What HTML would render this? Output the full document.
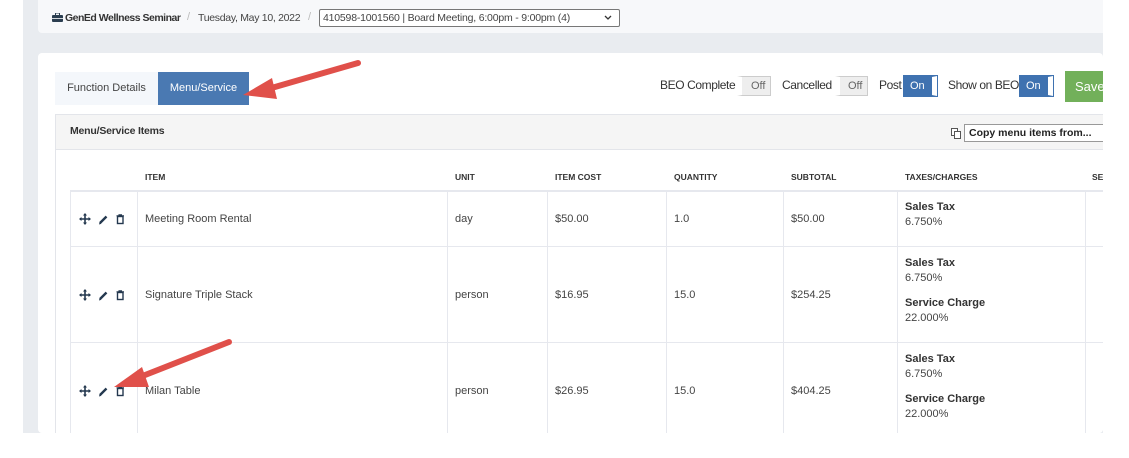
<!DOCTYPE html>
<html><head><meta charset="utf-8"><style>
*{box-sizing:border-box;margin:0;padding:0}
html,body{width:1129px;height:458px;overflow:hidden}
body{background:#fff;font-family:"Liberation Sans",sans-serif;color:#333;position:relative}
.a{position:absolute;white-space:nowrap}
#bg{left:23px;top:0;width:1080px;height:433px;background:#e9ecf0;overflow:hidden}
.crumb{left:15px;top:0;width:1070px;height:33px;background:#f7f8fa;border-radius:0 0 4px 4px;font-size:11px;color:#444}
#card{left:15px;top:53px;width:1065px;height:380px;background:#fff;border-radius:4px;overflow:hidden}
.tab{font-size:11px;height:33px;line-height:33px;text-align:center}
.tog{height:20px;border:1px solid #ccc;font-size:11px;line-height:18px}
.th{font-size:8.5px;font-weight:bold;color:#333;top:172px}
.vl{width:1px;background:#e6e8ee}
.hl{height:1px;background:#e6e8ee}
.c{font-size:11px;color:#444}
.b{font-size:11px;font-weight:bold;color:#333}
.lb{font-size:12px;color:#333;top:25px;letter-spacing:-0.4px}
</style></head><body>
<div id="bg" class="a">
 <div class="a crumb">
  <svg class="a" style="left:14px;top:13px" width="11" height="9" viewBox="0 0 11 9"><rect x="0" y="2" width="11" height="7" rx="1" fill="#2b3e50"/><rect x="3.5" y="0" width="4" height="3" fill="none" stroke="#2b3e50" stroke-width="1"/><rect x="0" y="5" width="11" height="0.8" fill="#fff"/></svg>
  <span class="a" style="left:27px;top:12px;font-weight:bold;font-size:10.5px;letter-spacing:-0.5px;color:#333">GenEd Wellness Seminar</span>
  <span class="a" style="left:149px;top:11px;color:#bbb">/</span>
  <span class="a" style="left:160px;top:12px;font-size:10.5px;letter-spacing:-0.3px">Tuesday, May 10, 2022</span>
  <span class="a" style="left:270px;top:11px;color:#bbb">/</span>
  <div class="a" style="left:281px;top:9px;width:301px;height:18px;border:1px solid #777;background:#fff;font-size:10.5px;line-height:16px;padding-left:3px;border-radius:2px;letter-spacing:-0.2px">410598-1001560 | Board Meeting, 6:00pm - 9:00pm (4)<svg class="a" style="right:7px;top:5px" width="8" height="6" viewBox="0 0 8 6"><path d="M1 1L4 4L7 1" fill="none" stroke="#333" stroke-width="1.3"/></svg></div>
 </div>
 <div id="card" class="a">
  <div class="a tab" style="left:17px;top:19px;width:103px;background:#f4f7fb;color:#444">Function Details</div>
  <div class="a tab" style="left:120px;top:19px;width:91px;background:#4a79b2;color:#fff">Menu/Service</div>
  <span class="a lb" style="left:622px">BEO Complete</span>
  <div class="a tog" style="left:699px;top:23px;width:34px;background:#eee;color:#666;padding-left:9px;border-left:5px solid #fff">Off</div>
  <span class="a lb" style="left:744px">Cancelled</span>
  <div class="a tog" style="left:797px;top:23px;width:33px;background:#eee;color:#666;padding-left:8px;border-left:5px solid #fff">Off</div>
  <span class="a lb" style="left:841px">Post</span>
  <div class="a tog" style="left:866px;top:23px;width:33px;background:#3f72b0;color:#fff;padding-left:5px;border:1px solid #3f72b0;border-right:5px solid #fff;outline:1px solid #3f72b0">On</div>
  <span class="a lb" style="left:910px">Show on BEO</span>
  <div class="a tog" style="left:982px;top:23px;width:33px;background:#3f72b0;color:#fff;padding-left:5px;border:1px solid #3f72b0;border-right:5px solid #fff;outline:1px solid #3f72b0">On</div>
  <div class="a" style="left:1027px;top:18px;width:60px;height:31px;background:#72b05a;color:#fff;font-size:13px;line-height:31px;padding-left:10px">Save</div>
  <div class="a" style="left:17px;top:61px;width:1100px;height:400px;border:1px solid #e3e5ea;background:#fff"></div>
  <div class="a" style="left:18px;top:62px;width:1100px;height:35px;background:#f5f5f5;border-bottom:1px solid #e3e5ea"></div>
  <span class="a b" style="left:32px;top:72px;font-size:10.5px;letter-spacing:-0.2px">Menu/Service Items</span>
  <svg class="a" style="left:913px;top:75px" width="10" height="11" viewBox="0 0 10 11"><rect x="0.5" y="0.5" width="6" height="7" fill="#fff" stroke="#555"/><rect x="3.5" y="3.5" width="6" height="7" fill="#fff" stroke="#555"/></svg>
  <div class="a" style="left:926px;top:71px;width:160px;height:18px;border:1px solid #999;background:#fff;font-size:10.5px;font-weight:bold;line-height:16px;padding-left:4px;color:#222">Copy menu items from...</div>
 </div>
 <div class="a" style="left:47px;top:190px;width:1040px;height:250px;border-left:1px solid #e6e8ee;border-top:2px solid #e6e8ee"></div>
 <div class="a vl" style="left:114px;top:190px;height:250px"></div>
 <div class="a vl" style="left:424px;top:190px;height:250px"></div>
 <div class="a vl" style="left:524px;top:190px;height:250px"></div>
 <div class="a vl" style="left:643px;top:190px;height:250px"></div>
 <div class="a vl" style="left:760px;top:190px;height:250px"></div>
 <div class="a vl" style="left:874px;top:190px;height:250px"></div>
 <div class="a vl" style="left:1062px;top:190px;height:250px"></div>
 <div class="a hl" style="left:47px;top:246px;width:1040px"></div>
 <div class="a hl" style="left:47px;top:342px;width:1040px"></div>
 <span class="a th" style="left:122px">ITEM</span>
 <span class="a th" style="left:432px">UNIT</span>
 <span class="a th" style="left:532px">ITEM COST</span>
 <span class="a th" style="left:651px">QUANTITY</span>
 <span class="a th" style="left:768px">SUBTOTAL</span>
 <span class="a th" style="left:882px">TAXES/CHARGES</span>
 <span class="a th" style="left:1069px">SE</span>

 <span class="a c" style="left:122px;top:213px">Meeting Room Rental</span>
 <span class="a c" style="left:432px;top:213px">day</span>
 <span class="a c" style="left:532px;top:213px">$50.00</span>
 <span class="a c" style="left:651px;top:213px">1.0</span>
 <span class="a c" style="left:768px;top:213px">$50.00</span>
 <span class="a b" style="left:882px;top:201px">Sales Tax</span>
 <span class="a c" style="left:882px;top:216px">6.750%</span>

 <span class="a c" style="left:122px;top:289px">Signature Triple Stack</span>
 <span class="a c" style="left:432px;top:289px">person</span>
 <span class="a c" style="left:532px;top:289px">$16.95</span>
 <span class="a c" style="left:651px;top:289px">15.0</span>
 <span class="a c" style="left:768px;top:289px">$254.25</span>
 <span class="a b" style="left:882px;top:257px">Sales Tax</span>
 <span class="a c" style="left:882px;top:272px">6.750%</span>
 <span class="a b" style="left:882px;top:297px">Service Charge</span>
 <span class="a c" style="left:882px;top:312px">22.000%</span>

 <span class="a c" style="left:122px;top:385px">Milan Table</span>
 <span class="a c" style="left:432px;top:385px">person</span>
 <span class="a c" style="left:532px;top:385px">$26.95</span>
 <span class="a c" style="left:651px;top:385px">15.0</span>
 <span class="a c" style="left:768px;top:385px">$404.25</span>
 <span class="a b" style="left:882px;top:353px">Sales Tax</span>
 <span class="a c" style="left:882px;top:368px">6.750%</span>
 <span class="a b" style="left:882px;top:393px">Service Charge</span>
 <span class="a c" style="left:882px;top:408px">22.000%</span>
</div>

<svg class="a" style="left:0;top:0" width="1129" height="458">
 <defs>
  <g id="ic">
   <g fill="#24384f" stroke="#24384f">
    <path d="M0 5H10M5 0V10" stroke-width="1.6"/>
    <path d="M5 -1L7 1.5H3Z M5 11L7 8.5H3Z M-1 5L1.5 3V7Z M11 5L8.5 3V7Z" stroke="none"/>
    <path d="M20 9L26.5 2.5" stroke-width="2.4"/>
    <path d="M19 10.5L19.6 8.3L21.2 9.9Z" stroke="none"/>
    <rect x="37.5" y="2.5" width="5.5" height="7" fill="none" stroke-width="1.4"/>
    <path d="M36.5 1.8H44M39 1.8V0.8H41.5V1.8" stroke-width="1.1" fill="none"/>
   </g>
  </g>
 </defs>
 <use href="#ic" x="80" y="214"/>
 <use href="#ic" x="80" y="290"/>
 <use href="#ic" x="80" y="386"/>
 <g fill="#e0504a" stroke="#e0504a">
  <path d="M358 63L268 89" stroke-width="6" stroke-linecap="round"/>
  <path d="M243 95L272 78L277 99Z" stroke="none"/>
  <path d="M229 342L140 377" stroke-width="6" stroke-linecap="round"/>
  <path d="M114 387L142 367L149 387Z" stroke="none"/>
 </g>
</svg>
</body></html>
